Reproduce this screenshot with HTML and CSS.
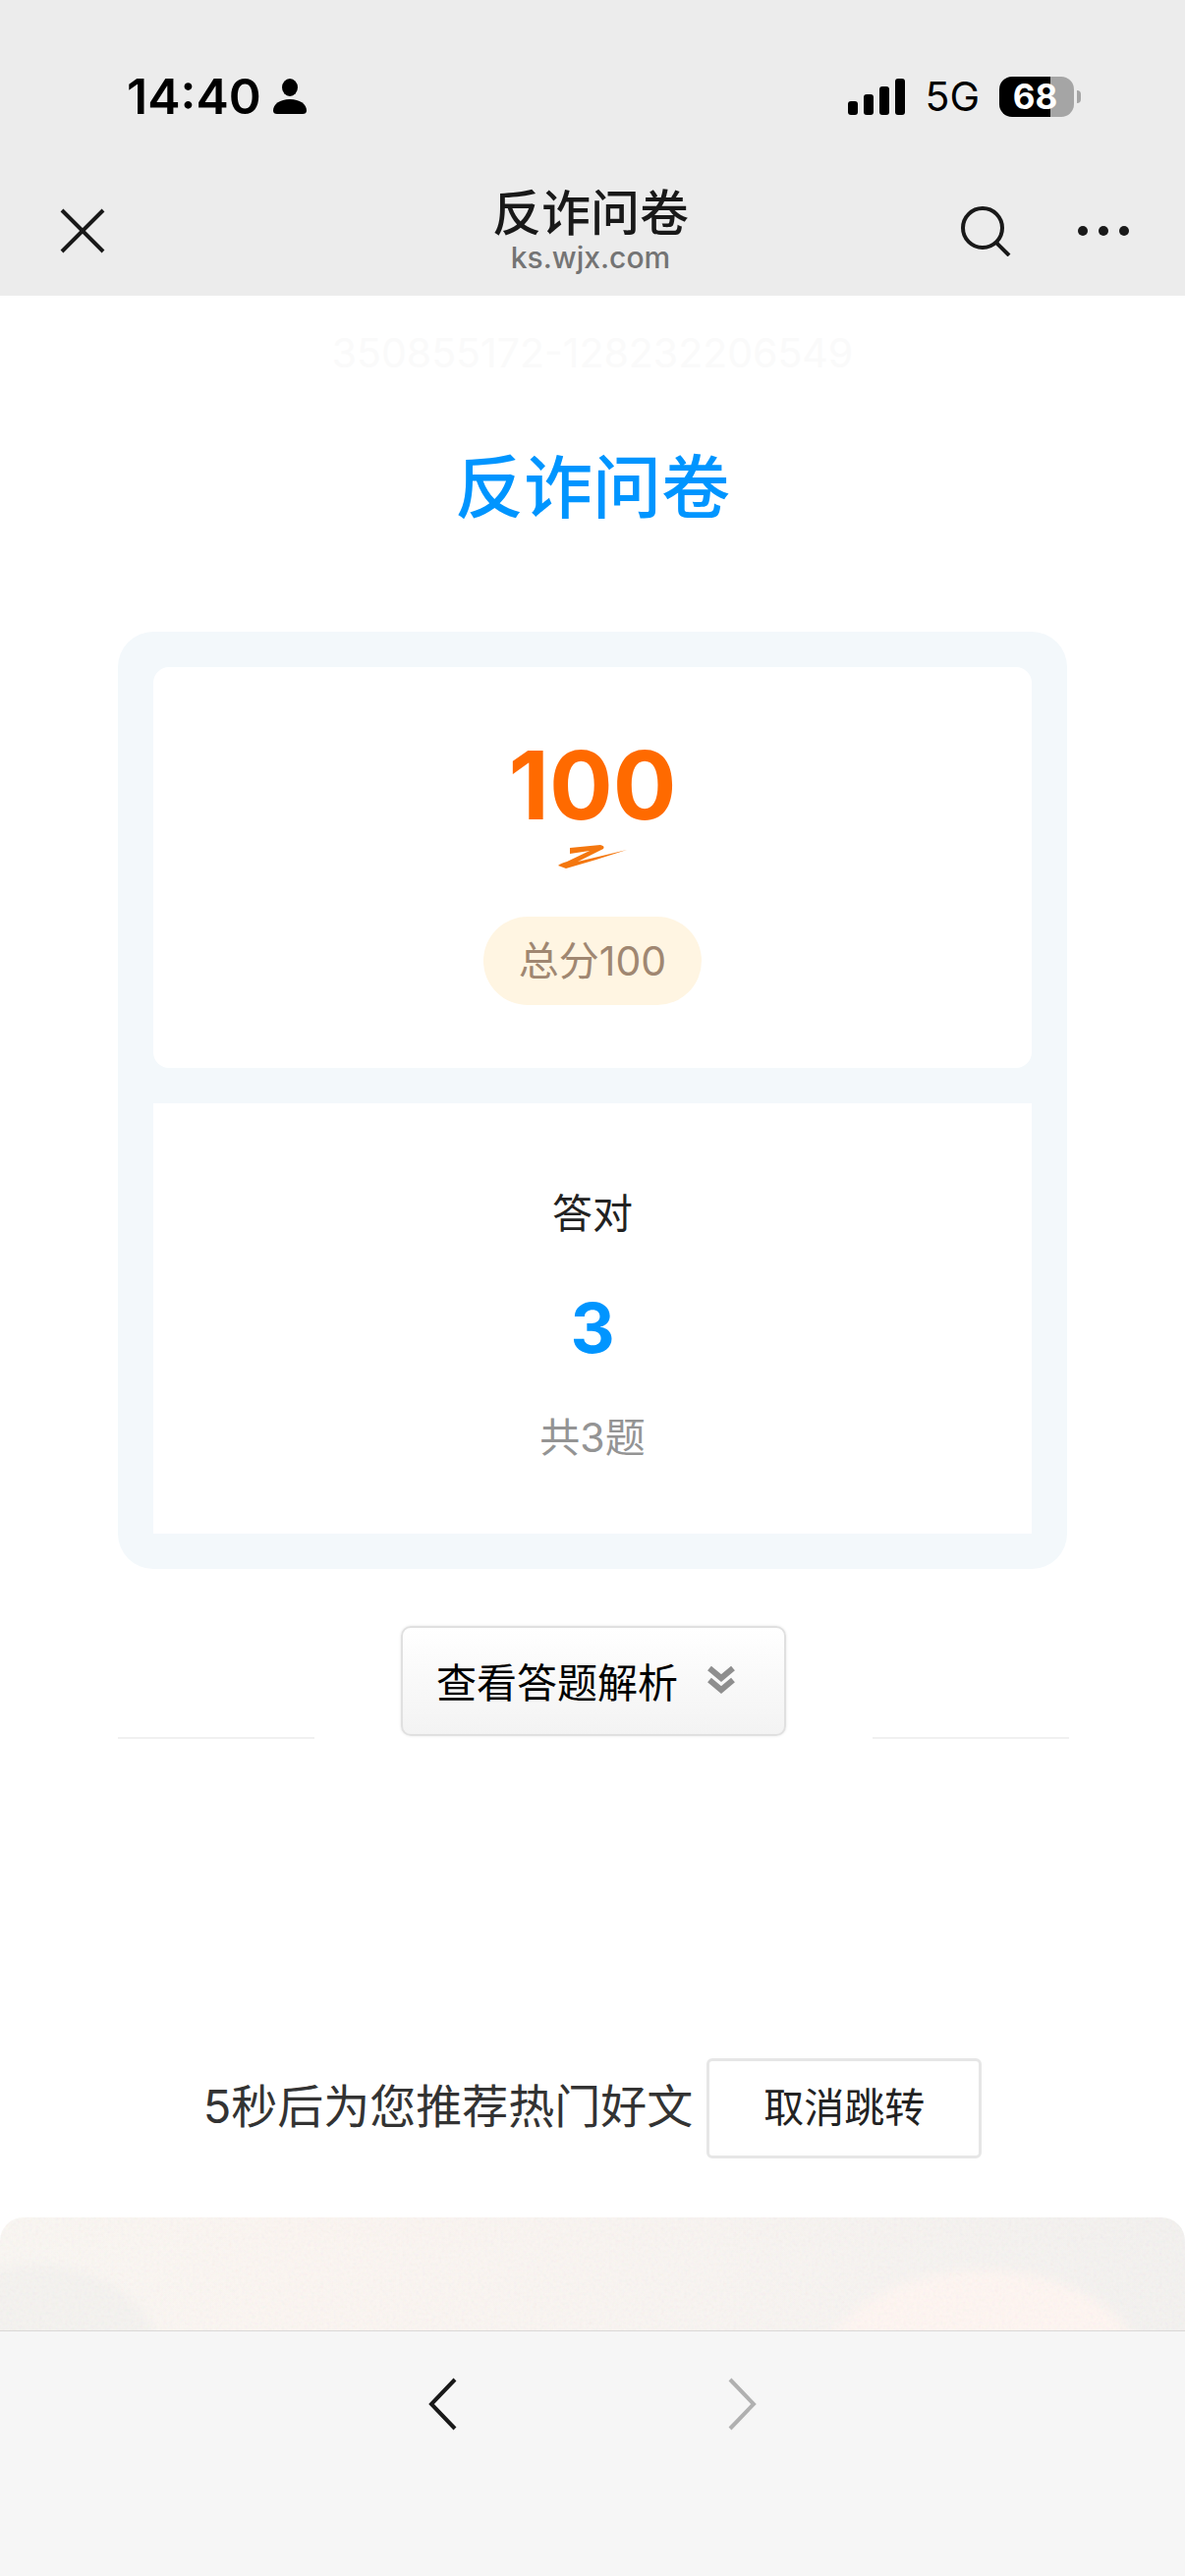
FILE: index.html
```html
<!DOCTYPE html>
<html lang="zh-CN">
<head>
  <meta charset="UTF-8">
  <meta name="viewport" content="width=device-width, initial-scale=1">
  <title>反诈问卷</title>
  <link rel="stylesheet" href="styles.css">
</head>
<body>
  <header class="top">
    <div class="status">
      <div class="status-left">
        <span class="time">14:40</span>
        <svg width="34" height="36" viewBox="0 0 34 36">
          <ellipse cx="17" cy="9" rx="8" ry="9"/>
          <path d="M4 36C1.500 36 0 35 0 32.500C0 26 7 21 17 21s17 5 17 11.500C34 35 32.500 36 30 36z"/>
        </svg>
      </div>
      <div class="status-right">
        <svg width="58" height="37" viewBox="0 0 58 37">
          <rect x="0" y="23" width="10" height="14" rx="3"/>
          <rect x="16" y="16" width="10" height="21" rx="3"/>
          <rect x="32" y="8" width="10" height="29" rx="3"/>
          <rect x="48" y="0" width="10" height="37" rx="3"/>
        </svg>
        <span class="network">5G</span>
        <div class="battery"><span class="battery-level">68</span></div>
      </div>
    </div>
    <nav class="nav">
      <button class="icon-btn" aria-label="关闭">
        <svg width="48" height="48" viewBox="0 0 48 48"><path d="M3 3l42 42M45 3L3 45"/></svg>
      </button>
      <div class="nav-title">
        <div class="nav-name">反诈问卷</div>
        <div class="nav-host">ks.wjx.com</div>
      </div>
      <div class="nav-actions">
        <button class="icon-btn" aria-label="搜索">
          <svg width="52" height="52" viewBox="0 0 52 52"><circle cx="22" cy="23" r="20"/><path d="M36 38l13 13"/></svg>
        </button>
        <button class="icon-btn" aria-label="更多">
          <svg class="dots" width="54" height="12" viewBox="0 0 54 12"><circle cx="6" cy="6" r="5"/><circle cx="27" cy="6" r="5"/><circle cx="48" cy="6" r="5"/></svg>
        </button>
      </div>
    </nav>
  </header>

  <main>
    <p class="serial">350855172-128232206549</p>
    <h1>反诈问卷</h1>

    <section class="result">
      <div class="score-box">
        <div class="score">100</div>
        <svg class="swoosh" width="70" height="24" viewBox="0 0 70 24">
          <path d="M12 3L43 0Q48 1 46 4L20 17L70 5Q40 15 8 24L0 21Q2 19 9 17L32 6L12 9z"/>
        </svg>
        <div class="total">总分100</div>
      </div>
      <div class="count-box">
        <div class="count-label">答对</div>
        <div class="count">3</div>
        <div class="count-total">共3题</div>
      </div>
    </section>

    <div class="analysis">
      <span class="rule"></span>
      <button class="btn-analysis">
        查看答题解析
        <svg width="28" height="30" viewBox="0 0 28 30"><path d="M2 3l12 10L26 3M2 15l12 10L26 15"/></svg>
      </button>
      <span class="rule"></span>
    </div>

    <div class="recommend">
      <span class="countdown">5秒后为您推荐热门好文</span>
      <button class="btn-cancel">取消跳转</button>
    </div>

    <div class="banner">
      <svg width="100%" height="100%" viewBox="0 0 1206 115" preserveAspectRatio="xMidYMin slice">
        <defs>
          <linearGradient id="paper">
            <stop offset="0" stop-color="#faf7f3"/>
            <stop offset="0.25" stop-color="#fcf6f2"/>
            <stop offset="0.6" stop-color="#f9f5f2"/>
            <stop offset="1" stop-color="#f4f2f0"/>
          </linearGradient>
          <filter id="soft"><feGaussianBlur stdDeviation="6"/></filter>
          <filter id="grain">
            <feTurbulence type="fractalNoise" baseFrequency="0.3" numOctaves="2" seed="4"/>
          </filter>
        </defs>
        <rect width="1206" height="115" fill="url(#paper)"/>
        <ellipse cx="35" cy="150" rx="130" ry="102" fill="#f5f3f0" filter="url(#soft)"/>
        <ellipse cx="1000" cy="170" rx="170" ry="116" fill="#fff6f2" filter="url(#soft)"/>
        <rect width="1206" height="115" filter="url(#grain)" opacity="0.08"/>
      </svg>
    </div>
  </main>

  <footer class="toolbar">
    <button class="icon-btn" aria-label="后退">
      <svg width="30" height="54" viewBox="0 0 30 54"><path d="M27 2L3 27l24 25"/></svg>
    </button>
    <button class="icon-btn" aria-label="前进" disabled>
      <svg width="30" height="54" viewBox="0 0 30 54"><path d="M3 2l24 25L3 52"/></svg>
    </button>
  </footer>
</body>
</html>
```
FILE: styles.css
```css
* {
  box-sizing: border-box;
}
body {
  margin: 0;
  height: 100vh;
  display: flex;
  flex-direction: column;
  background-color: #fff;
  color: #222;
  font-family: Inter, "Noto Sans CJK SC", sans-serif;
  font-size: 41px;
}
button {
  font-family: inherit;
  color: inherit;
  cursor: pointer;
}
svg {
  display: block;
}
.icon-btn {
  border: none;
  background: none;
  padding: 0;
}
.icon-btn svg {
  fill: none;
  stroke: #191919;
  stroke-width: 4;
}
.icon-btn .dots {
  fill: #191919;
  stroke: none;
}

/* top bars */
.top {
  background-color: #ececec;
  height: 301px;
  flex: none;
}
.status {
  display: flex;
  justify-content: space-between;
  align-items: center;
  height: 168px;
  padding: 28px 107px 0 129px;
  color: #000;
}
.status-left {
  display: flex;
  align-items: center;
  gap: 12px;
}
.status-right {
  display: flex;
  align-items: center;
  gap: 20px;
}
.time {
  font-size: 50px;
  font-weight: 600;
}
.network {
  font-size: 41px;
}
.battery {
  position: relative;
  width: 76px;
  height: 41px;
  border-radius: 13px;
  background: linear-gradient(to right, #000 68%, #a5a5a5 68%);
  margin-right: 6px;
}
.battery::after {
  content: "";
  position: absolute;
  right: -7px;
  top: 14px;
  width: 4px;
  height: 13px;
  border-radius: 0 4px 4px 0;
  background-color: #a5a5a5;
}
.battery-level {
  display: block;
  padding-right: 3px;
  text-align: center;
  color: #fff;
  font-size: 35px;
  font-weight: 700;
  line-height: 41px;
}
.nav {
  display: grid;
  grid-template-columns: 1fr auto 1fr;
  align-items: center;
  height: 133px;
  padding: 0 56px 0 60px;
}
.nav > .icon-btn {
  justify-self: start;
}
.nav-title {
  padding: 3px 8px 0 0;
  text-align: center;
}
.nav-name {
  color: #191919;
  font-size: 50px;
  font-weight: 500;
  line-height: 52px;
}
.nav-host {
  color: #747474;
  font-size: 30px;
  font-weight: 500;
  line-height: 38px;
}
.nav-actions {
  display: flex;
  justify-content: flex-end;
  align-items: center;
  gap: 66px;
}

/* result page */
main {
  flex: 1;
  min-height: 0;
  overflow: hidden;
  display: flex;
  flex-direction: column;
}
.serial {
  margin: 32px 0 0;
  color: #fafafa;
  line-height: 52px;
  text-align: center;
}
h1 {
  margin: 62px 0 0;
  color: #0095ff;
  font-size: 70px;
  font-weight: 500;
  line-height: 100px;
  text-align: center;
}
.result {
  display: flex;
  flex-direction: column;
  gap: 36px;
  margin: 96px 120px 0;
  padding: 36px;
  border-radius: 36px;
  background-color: #f3f8fb;
}
.score-box,
.count-box {
  display: flex;
  flex-direction: column;
  align-items: center;
  background-color: #fff;
}
.score-box {
  padding: 70px 0 64px;
  border-radius: 16px;
}
.score {
  color: #ff6a00;
  font-size: 96px;
  font-weight: 700;
  line-height: 100px;
}
.swoosh {
  fill: #f4770f;
  margin: 11px 0 49px;
}
.total {
  padding: 0 36px;
  border-radius: 45px;
  background-color: #fff5e2;
  color: #a08771;
  line-height: 90px;
}
.count-box {
  padding: 82px 0 68px;
}
.count-label {
  line-height: 60px;
}
.count {
  margin: 42px 0 36px;
  color: #0095ff;
  font-size: 70px;
  font-weight: 700;
  line-height: 90px;
}
.count-total {
  color: #949494;
  line-height: 60px;
}
.analysis {
  display: flex;
  justify-content: space-between;
  align-items: flex-end;
  margin: 58px 118px 0 120px;
}
.rule {
  width: 200px;
  height: 2px;
  background-color: #f0f0f0;
}
.btn-analysis {
  display: flex;
  align-items: center;
  gap: 30px;
  height: 112px;
  padding: 0 50px 2px 34px;
  margin-bottom: 3px;
  border: 2px solid #e0e0e0;
  border-radius: 10px;
  background: linear-gradient(#fff, #f3f3f3);
  box-shadow: 0 0 3px rgba(0,0,0,0.1);
  color: #000;
  font-size: 41px;
}
.btn-analysis svg {
  fill: none;
  stroke: #8e8e8e;
  stroke-width: 6;
}
.recommend {
  display: flex;
  justify-content: center;
  align-items: center;
  gap: 14px;
  margin-top: 325px;
  color: #333;
  font-size: 47px;
}
.countdown {
  padding-bottom: 12px;
}
.btn-cancel {
  height: 102px;
  padding: 0 55px 8px;
  border: 3px solid #e6e6e6;
  border-radius: 6px;
  background-color: #fff;
  color: #222;
  font-size: 41px;
}
.banner {
  flex: 1;
  min-height: 0;
  margin-top: 60px;
  border-radius: 24px 24px 0 0;
  overflow: hidden;
}

/* bottom bar */
.toolbar {
  flex: none;
  display: flex;
  justify-content: center;
  align-items: flex-start;
  gap: 274px;
  height: 250px;
  padding-top: 47px;
  border-top: 1px solid #dad8d7;
  background-color: #f6f6f6;
}
.toolbar .icon-btn:disabled svg {
  stroke: #b0b0b0;
}
```
